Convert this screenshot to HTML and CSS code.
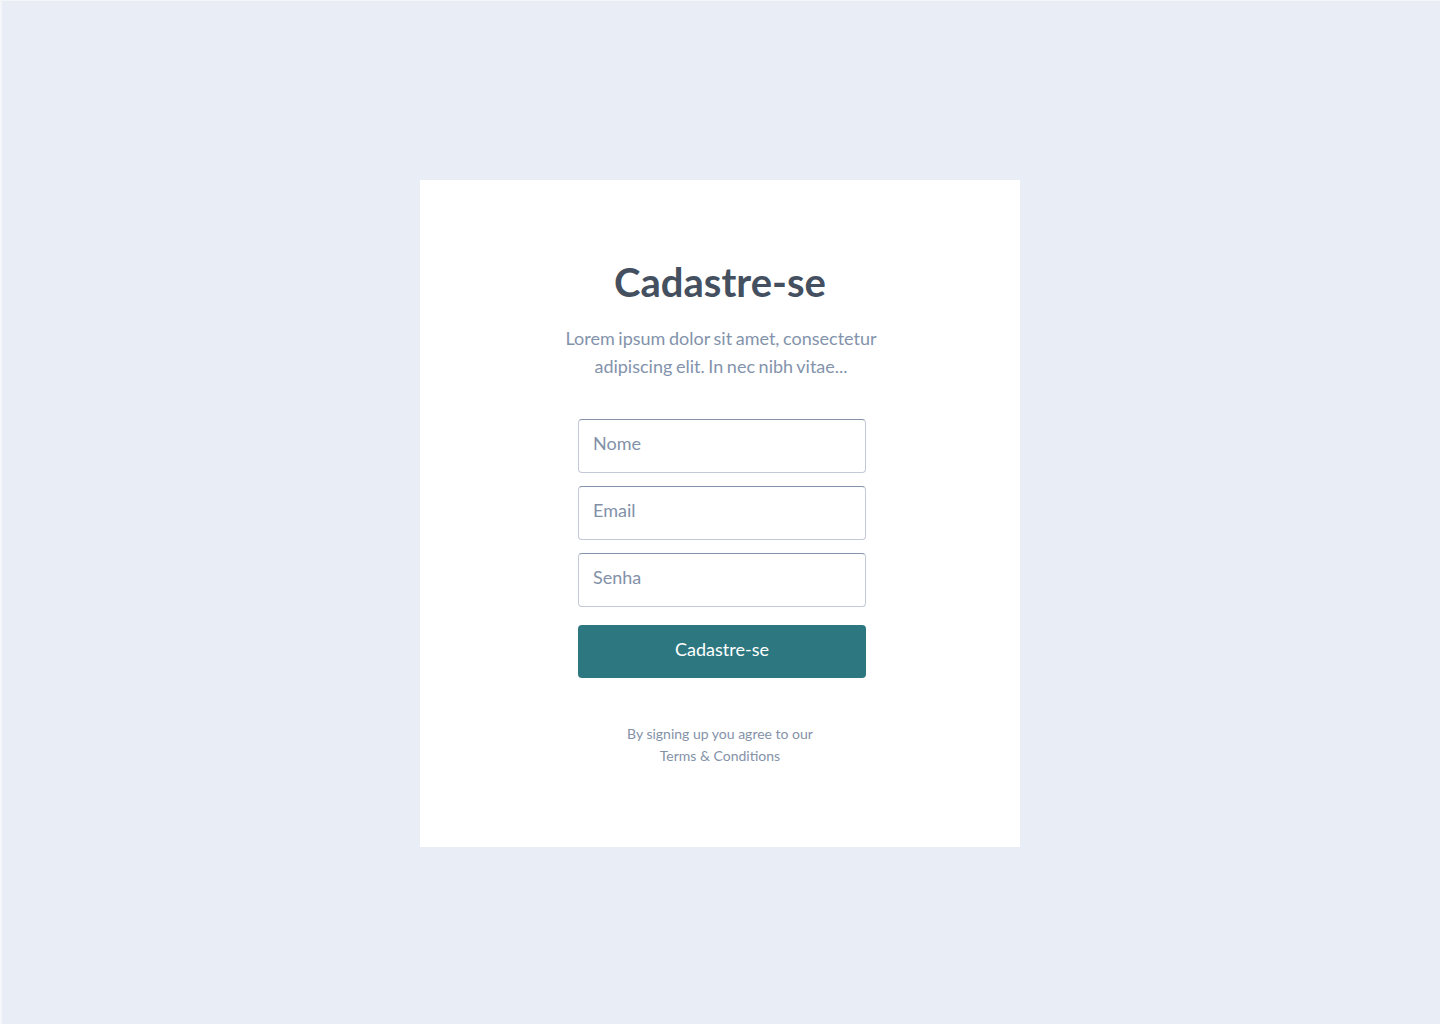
FILE: index.html
```html
<!DOCTYPE html>
<html lang="pt">
<head>
<meta charset="utf-8">
<title>Cadastre-se</title>
<link rel="stylesheet" href="styles.css">
</head>
<body>
<main class="page">
  <section class="card">
    <h1 class="title">Cadastre-se</h1>
    <p class="lead">Lorem ipsum dolor sit amet, consectetur<br>adipiscing elit. In nec nibh vitae...</p>
    <form class="form">
      <input class="field" type="text" placeholder="Nome">
      <input class="field" type="email" placeholder="Email">
      <input class="field" type="password" placeholder="Senha">
      <button class="btn" type="button">Cadastre-se</button>
    </form>
    <p class="terms">By signing up you agree to our<br>Terms &amp; Conditions</p>
  </section>
</main>
</body>
</html>
```
FILE: styles.css
```css
* { box-sizing: border-box; }
html, body { margin: 0; padding: 0; }
body {
  font-family: Lato, "Noto Sans", sans-serif;
  background: #e9edf5;
  border-left: 2px solid #f4f6fa;
  border-top: 1px solid #f4f6fa;
}
.page {
  min-height: 1023px;
  display: flex;
  align-items: flex-start;
  justify-content: center;
  padding-top: 179px;
}
.card {
  width: 600px;
  height: 667px;
  background: #ffffff;
  display: flex;
  flex-direction: column;
  align-items: center;
  padding-top: 78px;
  margin-left: -2px;
}
.title {
  margin: 0;
  font-size: 40px;
  line-height: 48px;
  font-weight: 700;
  color: #44505f;
}
.lead {
  margin: 18px 0 0;
  padding-left: 2px;
  font-size: 18px;
  line-height: 28px;
  word-spacing: -1px;
  color: #8393ab;
  text-align: center;
}
.form {
  margin-top: 39px;
  width: 288px;
  display: flex;
  flex-direction: column;
  gap: 13px;
  margin-left: 4px;
}
.field {
  height: 54px;
  border: 1px solid #c3c9d6;
  border-top-color: #8693a8;
  border-radius: 4px;
  padding: 0 14px 7px;
  font-family: Lato, "Noto Sans", sans-serif;
  font-size: 18px;
  color: #44505f;
  background: #fff;
  outline: none;
}
.field::placeholder { color: #8291a8; }
.btn {
  margin-top: 5px;
  height: 53px;
  border: none;
  border-radius: 4px;
  background: #2d7780;
  color: #ffffff;
  font-family: Lato, "Noto Sans", sans-serif;
  font-size: 18px;
  padding: 0 0 6px;
  cursor: pointer;
}
.terms {
  margin: 45px 0 0;
  font-size: 14px;
  line-height: 22px;
  color: #8492a8;
  text-align: center;
}
```
